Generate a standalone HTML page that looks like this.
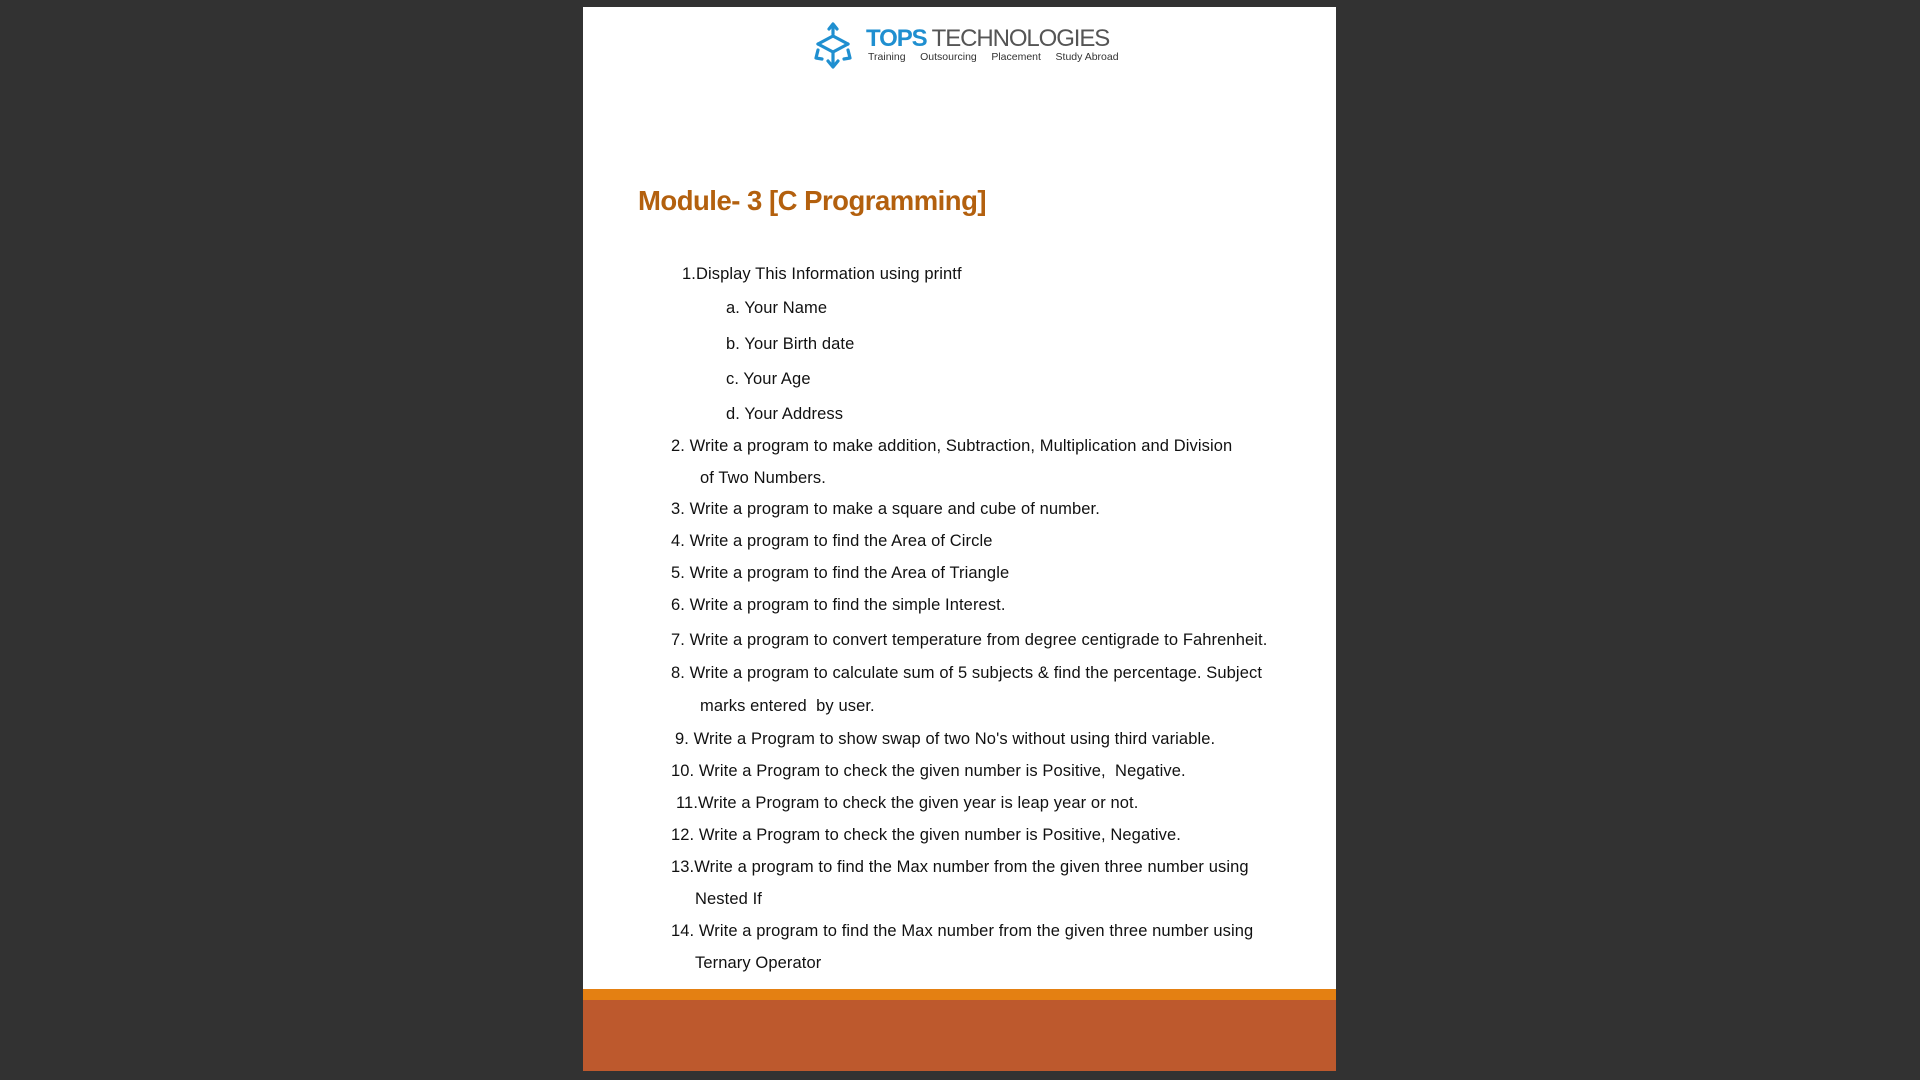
<!DOCTYPE html>
<html><head><meta charset="utf-8"><style>
html,body{margin:0;padding:0;width:1920px;height:1080px;background:#323232;overflow:hidden}
.page{position:absolute;left:583px;top:7px;width:753px;height:1064px;background:#fff}
.t{position:absolute;font-family:"Liberation Sans",Arial,sans-serif;font-size:16.5px;color:#111;white-space:nowrap;letter-spacing:0.1px}
</style></head><body>
<div class="page"></div>
<svg style="position:absolute;left:810px;top:20px" width="50" height="52" viewBox="810 20 50 52">
<g fill="none" stroke="#1f8fd0" stroke-width="3.2" stroke-linecap="round" stroke-linejoin="round">
<path d="M833 26 V34"/><path d="M829 29 L833 24 L837 29"/>
<path d="M818 44 L833 36 L848 44"/>
<path d="M818 44 L833 52 L848 44"/>
<path d="M833 52 V66"/><path d="M828 61 L833 67 L838 61"/>
<path d="M818 50 L816 58 L822 59"/>
<path d="M848 50 L850 58 L844 59"/>
</g></svg>
<div class="t" style="left:866px;top:25px;font-size:24px;letter-spacing:-1.1px;color:#555"><b style="color:#1f8fd0">TOPS</b> TECHNOLOGIES</div>
<div class="t" style="left:868px;top:51px;font-size:10.5px;color:#333;letter-spacing:0">Training&nbsp;&nbsp;&nbsp;&nbsp;&nbsp;Outsourcing&nbsp;&nbsp;&nbsp;&nbsp;&nbsp;Placement&nbsp;&nbsp;&nbsp;&nbsp;&nbsp;Study Abroad</div>
<div class="t" style="left:638px;top:185px;font-size:27.5px;font-weight:bold;color:#b3600e;letter-spacing:-0.5px">Module- 3 [C Programming]</div>
<div class="t" style="left:682px;top:265px">1.Display This Information using printf</div>
<div class="t" style="left:726px;top:299px">a. Your Name</div>
<div class="t" style="left:726px;top:335px">b. Your Birth date</div>
<div class="t" style="left:726px;top:370px">c. Your Age</div>
<div class="t" style="left:726px;top:405px">d. Your Address</div>
<div class="t" style="left:671px;top:437px">2. Write a program to make addition, Subtraction, Multiplication and Division</div>
<div class="t" style="left:700px;top:469px">of Two Numbers.</div>
<div class="t" style="left:671px;top:500px">3. Write a program to make a square and cube of number.</div>
<div class="t" style="left:671px;top:532px">4. Write a program to find the Area of Circle</div>
<div class="t" style="left:671px;top:564px">5. Write a program to find the Area of Triangle</div>
<div class="t" style="left:671px;top:596px">6. Write a program to find the simple Interest.</div>
<div class="t" style="left:671px;top:631px">7. Write a program to convert temperature from degree centigrade to Fahrenheit.</div>
<div class="t" style="left:671px;top:664px">8. Write a program to calculate sum of 5 subjects &amp; find the percentage. Subject</div>
<div class="t" style="left:700px;top:697px">marks entered&nbsp; by user.</div>
<div class="t" style="left:675px;top:730px">9. Write a Program to show swap of two No's without using third variable.</div>
<div class="t" style="left:671px;top:762px">10. Write a Program to check the given number is Positive,&nbsp; Negative.</div>
<div class="t" style="left:676px;top:794px">11.Write a Program to check the given year is leap year or not.</div>
<div class="t" style="left:671px;top:826px">12. Write a Program to check the given number is Positive, Negative.</div>
<div class="t" style="left:671px;top:858px">13.Write a program to find the Max number from the given three number using</div>
<div class="t" style="left:695px;top:890px">Nested If</div>
<div class="t" style="left:671px;top:922px">14. Write a program to find the Max number from the given three number using</div>
<div class="t" style="left:695px;top:954px">Ternary Operator</div>
<div style="position:absolute;left:583px;top:989px;width:753px;height:11px;background:#e48012"></div>
<div style="position:absolute;left:583px;top:1000px;width:753px;height:71px;background:#bd592d"></div>
</body></html>
